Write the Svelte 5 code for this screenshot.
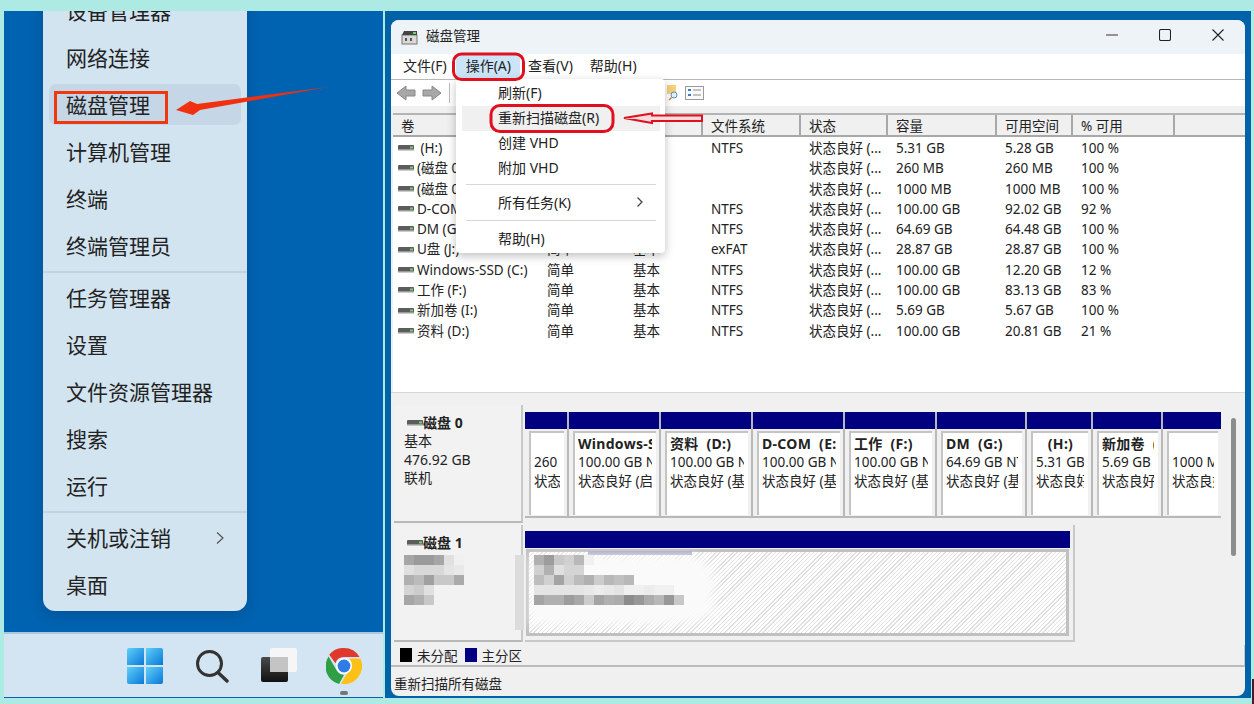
<script lang="ts">
	const menuTop = ['设备管理器', '网络连接', '磁盘管理', '计算机管理', '终端', '终端管理员'];
	const menuMid = ['任务管理器', '设置', '文件资源管理器', '搜索', '运行'];

	const columns = [
		{ label: '卷', width: 146 },
		{ label: '布局', width: 86 },
		{ label: '类型', width: 78 },
		{ label: '文件系统', width: 98 },
		{ label: '状态', width: 87 },
		{ label: '容量', width: 109 },
		{ label: '可用空间', width: 76 },
		{ label: '% 可用', width: 102 }
	];

	const rows = [
		[' (H:)', '简单', '基本', 'NTFS', '状态良好 (...', '5.31 GB', '5.28 GB', '100 %'],
		['(磁盘 0 磁盘分区 1)', '简单', '基本', '', '状态良好 (...', '260 MB', '260 MB', '100 %'],
		['(磁盘 0 磁盘分区 8)', '简单', '基本', '', '状态良好 (...', '1000 MB', '1000 MB', '100 %'],
		['D-COM (E:)', '简单', '基本', 'NTFS', '状态良好 (...', '100.00 GB', '92.02 GB', '92 %'],
		['DM (G:)', '简单', '基本', 'NTFS', '状态良好 (...', '64.69 GB', '64.48 GB', '100 %'],
		['U盘 (J:)', '简单', '基本', 'exFAT', '状态良好 (...', '28.87 GB', '28.87 GB', '100 %'],
		['Windows-SSD (C:)', '简单', '基本', 'NTFS', '状态良好 (...', '100.00 GB', '12.20 GB', '12 %'],
		['工作 (F:)', '简单', '基本', 'NTFS', '状态良好 (...', '100.00 GB', '83.13 GB', '83 %'],
		['新加卷 (I:)', '简单', '基本', 'NTFS', '状态良好 (...', '5.69 GB', '5.67 GB', '100 %'],
		['资料 (D:)', '简单', '基本', 'NTFS', '状态良好 (...', '100.00 GB', '20.81 GB', '21 %']
	];

	const partitions = [
		{ w: 44, name: '', size: '260 MB', state: '状态良好' },
		{ w: 92, name: 'Windows-SSD (C:)', size: '100.00 GB NTFS', state: '状态良好 (启动)' },
		{ w: 92, name: '资料  (D:)', size: '100.00 GB NTFS', state: '状态良好 (基本)' },
		{ w: 92, name: 'D-COM  (E:)', size: '100.00 GB NTFS', state: '状态良好 (基本)' },
		{ w: 92, name: '工作  (F:)', size: '100.00 GB NTFS', state: '状态良好 (基本)' },
		{ w: 90, name: 'DM  (G:)', size: '64.69 GB NTFS', state: '状态良好 (基本)' },
		{ w: 66, name: '   (H:)', size: '5.31 GB NTFS', state: '状态良好 (基本)' },
		{ w: 70, name: '新加卷  (I:)', size: '5.69 GB NTFS', state: '状态良好 (基本)' },
		{ w: 58, name: '', size: '1000 MB', state: '状态良好' }
	];

	// mosaic over the second disk's label and partition, 10px cells
	const mosaicA = [
		['a6', '9a', '9a', 'a6', 'e0', 'f0'],
		['e0', 'd8', 'd8', 'd8', 'e4', 'e8'],
		['b0', 'bb', 'a0', 'c8', 'c8', 'aa'],
		['d4', 'cc', 'e0'],
		['a6', 'b0', 'c8']
	];
	const mosaicB = [
		['b0', '9c', 'c8', 'd0', 'b8', 'f0'],
		['d0', 'b0', 'e0', 'd4', 'd4'],
		['bd', 'd0', 'a4', 'd0', 'bc', 'b0', 'cc', 'b8', 'c0', 'b8'],
		['e4', 'e4', 'e4', 'e4', 'e4', 'e8', 'ec', 'e8', 'e4', 'f0', 'f0', 'ec', 'f0', 'f0'],
		['a4', 'b0', 'b0', '9c', 'a8', 'cc', 'a4', 'b0', 'ac', '8c', '98', 'ac', 'b8', '98', 'c8']
	];
</script>

{#snippet driveIcon()}
	<svg class="drive" width="16" height="6" viewBox="0 0 16 6">
		<rect width="16" height="5" rx="1" fill="#5c5c5c" />
		<rect y="4" width="16" height="1.5" fill="#9a9a9a" />
		<rect x="12" y="1.5" width="3" height="2" fill="#6fd06f" />
	</svg>
{/snippet}

<div class="screen">
	<section class="desktop">
		<div class="start-menu">
			{#each menuTop as item}
				<div class="item" class:hot={item === '磁盘管理'}>{item}</div>
			{/each}
			<div class="rule"></div>
			{#each menuMid as item}
				<div class="item">{item}</div>
			{/each}
			<div class="rule"></div>
			<div class="item">
				关机或注销
				<svg class="more" width="10" height="14" viewBox="0 0 10 14">
					<path d="M2 1.5 8 7 2 12.5" fill="none" stroke="#555" stroke-width="1.2" />
				</svg>
			</div>
			<div class="item">桌面</div>
		</div>

		<div class="taskbar">
			<svg width="36" height="36" viewBox="0 0 36 36">
				<defs>
					<linearGradient id="win" x1="0" y1="0" x2="1" y2="1">
						<stop offset="0" stop-color="#5fd0fb" />
						<stop offset="1" stop-color="#0a78d6" />
					</linearGradient>
				</defs>
				<path d="M2 0h15v17H0V2a2 2 0 0 1 2-2Z" fill="url(#win)" />
				<path d="M19 0h15a2 2 0 0 1 2 2v15H19Z" fill="url(#win)" />
				<path d="M0 19h17v17H2a2 2 0 0 1-2-2Z" fill="url(#win)" />
				<path d="M19 19h17v15a2 2 0 0 1-2 2H19Z" fill="url(#win)" />
			</svg>
			<svg width="34" height="34" viewBox="0 0 34 34">
				<circle cx="14.5" cy="14.5" r="12" fill="none" stroke="#333" stroke-width="3" />
				<path d="M23 23.5 32 32" stroke="#333" stroke-width="3.4" stroke-linecap="round" />
			</svg>
			<svg width="36" height="36" viewBox="0 0 36 36">
				<defs>
					<linearGradient id="dark" x1="0" y1="0" x2="0" y2="1">
						<stop offset="0" stop-color="#4a4a4a" />
						<stop offset="1" stop-color="#111" />
					</linearGradient>
				</defs>
				<rect x="0" y="9" width="27" height="25" rx="2" fill="url(#dark)" />
				<rect x="9" y="0" width="27" height="24" rx="2" fill="#f6f6f6" />
				<rect x="9" y="9" width="18" height="15" fill="#c4c4c4" />
			</svg>
			<svg class="chrome" width="36" height="36" viewBox="0 0 36 36">
				<path d="M18 0a18 18 0 0 1 15.6 9H18a9 9 0 0 0-8.6 6.3L3.2 6.8A18 18 0 0 1 18 0Z" fill="#e0382c" />
				<path d="M2.6 8.5 10.7 22.6A9 9 0 0 0 18 27l-5 9A18 18 0 0 1 2.6 8.5Z" fill="#2f9e45" />
				<path d="M34.3 10.5A18 18 0 0 1 15 35.8L23 22a9 9 0 0 0 .6-11.5Z" fill="#fbc116" />
				<circle cx="18" cy="18" r="8" fill="#fff" />
				<circle cx="18" cy="18" r="6.4" fill="#2f7be8" />
			</svg>
		</div>
		<div class="running"></div>
	</section>

	<section class="desk-right">
		<div class="window">
			<header class="titlebar">
				<svg width="17" height="15" viewBox="0 0 17 15">
					<rect x="1" y="5" width="15" height="9" fill="#d8d8d8" stroke="#777" />
					<path d="M1 5 3 1h13v4Z" fill="#444" />
					<rect x="12" y="2" width="3" height="2" fill="#6fd06f" />
					<rect x="4" y="8" width="2" height="3" fill="#555" />
					<rect x="9" y="8" width="2" height="3" fill="#555" />
				</svg>
				<span class="title">磁盘管理</span>
				<div class="controls">
					<svg width="12" height="12" viewBox="0 0 12 12"><path d="M0 6h12" stroke="#333" stroke-width="1" /></svg>
					<svg width="12" height="12" viewBox="0 0 12 12"><rect x=".5" y=".5" width="11" height="11" rx="1.5" fill="none" stroke="#222" stroke-width="1.1" /></svg>
					<svg width="12" height="12" viewBox="0 0 12 12"><path d="M.5.5l11 11M11.5.5l-11 11" stroke="#222" stroke-width="1.1" /></svg>
				</div>
			</header>

			<nav class="menubar">
				<span>文件(F)</span>
				<span class="open">操作(A)</span>
				<span>查看(V)</span>
				<span>帮助(H)</span>
			</nav>

			<div class="toolbar">
				<svg width="46" height="18" viewBox="0 0 46 18">
					<path d="M1 9 10 2v4h9v6h-9v4Z" fill="#a8a8a8" stroke="#888" />
					<path d="M45 9 36 2v4h-9v6h9v4Z" fill="#a8a8a8" stroke="#888" />
				</svg>
				<span class="tool-sep"></span>
				<svg class="tool-find" width="12" height="16" viewBox="0 0 12 16">
					<path d="M0 0h9v9H0Z" fill="#f2d27a" />
					<circle cx="7" cy="10" r="3" fill="#dff0fb" stroke="#5b8fb8" />
					<path d="M4.5 12.5 2 15" stroke="#c08a30" stroke-width="1.5" />
				</svg>
				<svg class="tool-list" width="19" height="14" viewBox="0 0 19 14">
					<rect x=".5" y=".5" width="18" height="13" fill="#fafafa" stroke="#9a9a9a" />
					<path d="M3 4h3M3 9h3" stroke="#3b78c4" stroke-width="2" />
					<path d="M8 4h8M8 9h8" stroke="#8a8a8a" />
				</svg>
			</div>

			<div class="volumes">
				<div class="thead">
					{#each columns as col}
						<div class="th" style="width: {col.width}px">{col.label}</div>
					{/each}
				</div>
				<div class="tbody">
					{#each rows as row}
						<div class="tr">
							{#each row as cell, i}
								<div class="td" style="width: {columns[i].width}px">{#if i === 0}{@render driveIcon()}{/if}<span>{cell}</span></div>
							{/each}
						</div>
					{/each}
				</div>
			</div>

			<div class="splitter"></div>

			<div class="disks">
				<div class="disk-list">
					<div class="disk disk-0">
						<div class="disk-label">
							<div class="disk-name">{@render driveIcon()}磁盘 0</div>
							<div>基本</div>
							<div>476.92 GB</div>
							<div>联机</div>
						</div>
						<div class="parts">
							{#each partitions as p}
								<div class="part" style="width: {p.w}px">
									<div class="part-bar"></div>
									<div class="part-box">
										<div class="part-text">
											<b>{p.name}&nbsp;</b>
											<span>{p.size}</span>
											<span>{p.state}</span>
										</div>
									</div>
								</div>
							{/each}
						</div>
					</div>
					<div class="disk disk-1">
						<div class="disk-label">
							<div class="disk-name">{@render driveIcon()}磁盘 1</div>
						</div>
						<div class="usb">
							<div class="part-bar"></div>
							<div class="hatch"></div>
						</div>
					</div>
				</div>
				<div class="scroll"><div class="thumb"></div></div>
			</div>

			<div class="legend">
				<i class="swatch black"></i>未分配
				<i class="swatch navy"></i>主分区
			</div>
			<footer class="status">重新扫描所有磁盘</footer>

			<div class="dropdown">
				<div class="drop-item">刷新(F)</div>
				<div class="drop-item hover">重新扫描磁盘(R)</div>
				<div class="drop-item">创建 VHD</div>
				<div class="drop-item">附加 VHD</div>
				<div class="drop-rule"></div>
				<div class="drop-item tall">
					所有任务(K)
					<svg width="8" height="12" viewBox="0 0 8 12"><path d="M1.5 1.5 6 6l-4.500 4.500" fill="none" stroke="#444" stroke-width="1.3" /></svg>
				</div>
				<div class="drop-rule"></div>
				<div class="drop-item tall">帮助(H)</div>
			</div>
		</div>
	</section>

	<svg class="marks" width="1254" height="704" viewBox="0 0 1254 704">
		<defs>
			<filter id="soft"><feGaussianBlur stdDeviation="5" /></filter>
			<filter id="tiny"><feGaussianBlur stdDeviation="0.6" /></filter>
		</defs>

		<!-- smudged-out disk 1 details -->
		<rect x="588" y="551" width="104" height="4" fill="#a9a9c9" />
		<path d="M530 556H690C715 560 722 590 708 600 735 610 700 626 640 624H530Z" fill="#fafafa" filter="url(#soft)" />
		<rect x="515" y="555" width="9" height="75" fill="#dcdcdc" filter="url(#tiny)" />
		<g filter="url(#tiny)">
			{#each mosaicA as line, y}
				{#each line as c, x}
					<rect x={404 + x * 10} y={555 + y * 10} width="10" height="10" fill="#{c}{c}{c}" />
				{/each}
			{/each}
			{#each mosaicB as line, y}
				{#each line as c, x}
					<rect x={534 + x * 10} y={555 + y * 10} width="10" height="10" fill="#{c}{c}{c}" />
				{/each}
			{/each}
		</g>

		<!-- red annotations -->
		<rect x="55.500" y="92.500" width="111" height="30" fill="none" stroke="#f0380f" stroke-width="3" />
		<path d="M176 110 190 101 197 104 328 87 200 110 193 115Z" fill="#f0300f" />
		<rect x="453.500" y="54" width="70" height="25.500" rx="8" fill="none" stroke="#e0101e" stroke-width="3" />
		<rect x="491" y="105.500" width="122" height="26" rx="9" fill="none" stroke="#e0101e" stroke-width="3" />
		<path d="M624 118 652 113.500V115.500H702V121H652V123Z" fill="#f6dcdc" stroke="#e0101e" stroke-width="2" />
		<rect x="1252" y="679" width="2" height="25" fill="#4c1a2a" />
	</svg>
</div>

<style>
	:global(body) {
		margin: 0;
		background: #aeeae4;
	}

	.screen {
		position: relative;
		display: flex;
		gap: 2px;
		width: 1254px;
		height: 704px;
		box-sizing: border-box;
		padding: 11px 3px 6px 4px;
		overflow: hidden;
		background: #aeeae4;
		font-family: 'Noto Sans', 'Noto Sans CJK SC', sans-serif;
		color: #222;
	}

	.desktop {
		position: relative;
		display: flex;
		flex-direction: column;
		width: 379px;
		flex-shrink: 0;
		overflow: hidden;
		background: #0063b1;
	}

	.start-menu {
		width: 204px;
		height: 624px;
		flex-shrink: 0;
		box-sizing: border-box;
		margin: -24px 0 21px 39px;
		background: #d3e4f1;
		border-radius: 0 0 12px 12px;
		box-shadow: 0 4px 14px rgba(0, 30, 70, 0.25);
		font-family: 'Noto Sans CJK SC', sans-serif;
		font-size: 21px;
	}

	.item {
		position: relative;
		display: flex;
		align-items: center;
		justify-content: space-between;
		height: 47px;
		margin: 0 6px;
		padding: 0 17px;
		border-radius: 7px;
		line-height: 1;
	}

	.item.hot {
		height: 41px;
		margin-top: 3px;
		margin-bottom: 3px;
		background: #c5d7e6;
	}

	.more {
		margin-right: -1px;
	}

	.rule {
		height: 2px;
		margin: 2px 0 1px;
		background: #c0d3e2;
	}

	.taskbar {
		display: flex;
		align-items: center;
		gap: 32px;
		height: 65px;
		padding-left: 123px;
		box-sizing: border-box;
		flex-shrink: 0;
		background: #d3e5f2;
		border-top: 2px solid #a9c8de;
	}

	.chrome {
		margin-left: -3px;
	}

	.running {
		position: absolute;
		left: 336px;
		bottom: 3px;
		width: 8px;
		height: 4px;
		border-radius: 2px;
		background: #777;
	}

	.desk-right {
		flex: 1;
		padding: 9px 6px 2px;
		background: #0063a8;
		min-width: 0;
	}

	.window {
		position: relative;
		display: flex;
		flex-direction: column;
		height: 100%;
		overflow: hidden;
		border-radius: 8px;
		background: #f0f0f0;
		font-size: 13.5px;
	}

	.titlebar {
		display: flex;
		align-items: center;
		height: 34px;
		flex-shrink: 0;
		box-sizing: border-box;
		padding: 0 0 0 10px;
		background: #eef3f8;
	}

	.title {
		margin: 0 0 4px 8px;
		font-size: 13.5px;
	}

	.controls {
		display: flex;
		gap: 41px;
		margin: 0 21px 4px auto;
	}

	.menubar {
		display: flex;
		align-items: center;
		height: 25px;
		flex-shrink: 0;
		padding-left: 5px;
		background: #fff;
		font-size: 14px;
	}

	.menubar span {
		height: 25px;
		padding: 0 9px 0 8px;
		line-height: 24px;
	}

	.menubar span:first-child {
		padding-left: 7px;
	}

	.menubar .open {
		padding: 0 9px 0 10px;
		background: #cce4f7;
	}

	.toolbar {
		display: flex;
		align-items: center;
		height: 27px;
		flex-shrink: 0;
		padding-left: 5px;
		background: #fff;
		border-top: 1px solid #b8b8b8;
		box-sizing: border-box;
	}

	.tool-sep {
		width: 1px;
		height: 20px;
		margin-left: 7px;
		background: #bbb;
	}

	.tool-find {
		margin-left: 217px;
	}

	.tool-list {
		margin-left: 6px;
	}

	.volumes {
		height: 279px;
		flex-shrink: 0;
		margin: 7px 0 0 2px;
		overflow: hidden;
		background: #fff;
	}

	.thead {
		display: flex;
		height: 24px;
		box-sizing: border-box;
		background: #f0f0f0;
		border-top: 2px solid #b4b4b4;
		border-bottom: 2px solid #a8a8a8;
	}

	.th {
		box-sizing: border-box;
		flex-shrink: 0;
		padding-left: 8px;
		line-height: 22px;
		font-size: 13.5px;
		border-right: 2px solid #a8a8a8;
	}

	.tbody {
		padding-top: 1px;
	}

	.tr {
		display: flex;
		height: 20.3px;
		line-height: 20.3px;
	}

	.td {
		display: flex;
		align-items: center;
		gap: 4px;
		flex-shrink: 0;
		box-sizing: border-box;
		padding-left: 8px;
		overflow: hidden;
		white-space: pre;
		font-size: 13.5px;
	}

	.td:first-child {
		padding-left: 5px;
		gap: 3px;
	}

	.drive {
		flex-shrink: 0;
	}

	.splitter {
		height: 11px;
		flex-shrink: 0;
		background: #f0f0f0;
		border-top: 1px solid #d8d8d8;
		box-sizing: border-box;
	}

	.disks {
		display: flex;
		flex-shrink: 0;
		height: 242px;
		background: #f0f0f0;
	}

	.disk-list {
		width: 832px;
		margin-left: 3px;
	}

	.disk {
		display: flex;
		gap: 2px;
		height: 120px;
		box-sizing: border-box;
		padding-top: 2px;
	}

	.disk-label {
		width: 129px;
		flex-shrink: 0;
		box-sizing: border-box;
		padding: 9px 0 0 10px;
		background: #f2f2f2;
		border-right: 2px solid #c8c8c8;
		border-bottom: 2px solid #b8b8b8;
		font-size: 14px;
		line-height: 18.4px;
	}

	.disk-name {
		display: flex;
		align-items: center;
		margin-left: 3px;
		font-weight: 700;
	}

	.parts {
		display: flex;
		width: 696px;
		height: 113px;
		box-sizing: border-box;
		padding-top: 7px;
		background: #f0f0f0;
		border-bottom: 2px solid #b8b8b8;
	}

	.part {
		flex-shrink: 0;
		box-sizing: border-box;
		border-right: 2px solid #b8b8b8;
	}

	.part:last-child {
		border-right: 0;
	}

	.part-bar {
		height: 17px;
		background: #000080;
	}

	.part-box {
		height: 84px;
		box-sizing: border-box;
		margin: 2px 3px 0 4px;
		padding: 2px 4px 0 3px;
		background: #fff;
		border-left: 2px solid #c4c4c4;
		border-top: 2px solid #c4c4c4;
	}

	.part-text {
		display: flex;
		flex-direction: column;
		height: 100%;
		overflow: hidden;
		font-size: 13.5px;
		line-height: 18.4px;
		white-space: pre;
	}

	.part-text b {
		font-weight: 700;
		font-size: 14px;
		letter-spacing: 0.3px;
	}

	.disk-1 .disk-label {
		height: 117px;
	}

	.usb {
		width: 550px;
		height: 117px;
		box-sizing: border-box;
		padding: 6px 3px 0 0;
		border-right: 2px solid #c8c8c8;
		border-bottom: 2px solid #c8c8c8;
	}

	.hatch {
		height: 81px;
		margin: 4px 4px 0 4px;
		background: repeating-linear-gradient(135deg, #e0e0e0 0 1px, #fff 1px 3px);
		box-shadow: 0 0 0 3px #c0c0c0;
	}

	.scroll {
		flex: 1;
		padding: 15px 0 0 5px;
	}

	.thumb {
		width: 5px;
		height: 138px;
		border-radius: 3px;
		background: #8d8d8d;
	}

	.legend {
		display: flex;
		align-items: center;
		height: 22px;
		flex-shrink: 0;
		padding-left: 9px;
		box-sizing: border-box;
		border-right: 1px solid #c8c8c8;
		border-bottom: 2px solid #bbb;
		font-size: 13.5px;
	}

	.swatch {
		width: 12px;
		height: 14px;
		margin-right: 5px;
	}

	.swatch.black {
		background: #000;
	}

	.swatch.navy {
		margin-left: 7px;
		background: #000080;
	}

	.status {
		flex: 1;
		padding: 5px 0 0 3px;
		font-size: 13.5px;
		line-height: 24px;
	}

	.dropdown {
		position: absolute;
		left: 65px;
		top: 59px;
		width: 209px;
		height: 174px;
		box-sizing: border-box;
		padding: 2px 5px 0 6px;
		background: #fff;
		border-radius: 4px;
		box-shadow: 0 3px 10px rgba(0, 0, 0, 0.25);
		font-size: 14px;
	}

	.drop-item {
		display: flex;
		align-items: center;
		justify-content: space-between;
		box-sizing: border-box;
		height: 25px;
		padding: 0 16px 3px 36px;
	}

	.drop-item.hover {
		background: #f0f0f0;
	}

	.drop-item.tall {
		height: 30px;
	}

	.drop-rule {
		height: 1px;
		margin: 3px 4px;
		background: #d8d8d8;
	}

	.tall + .drop-rule {
		margin-top: 2px;
	}

	.marks {
		position: absolute;
		left: 0;
		top: 0;
		pointer-events: none;
	}
</style>
